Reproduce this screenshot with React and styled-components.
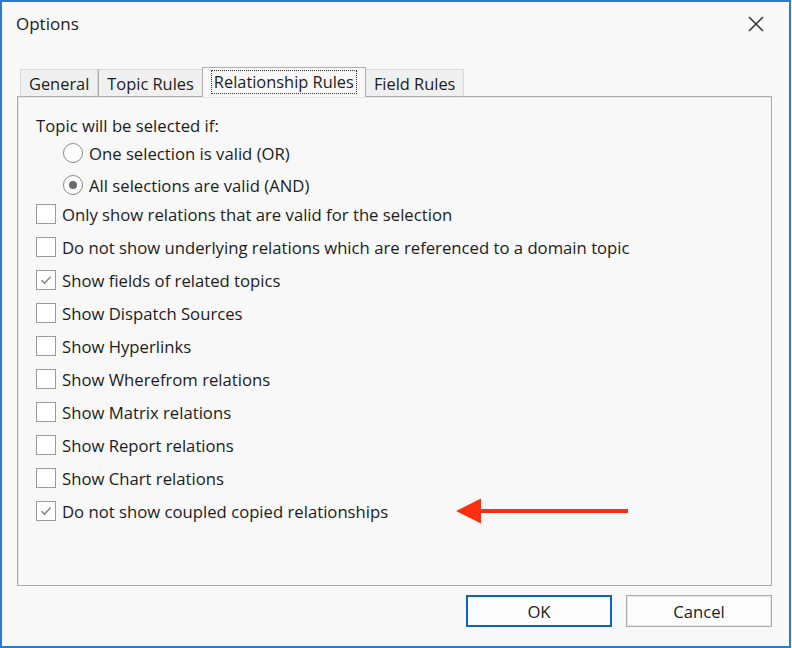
import { useState } from "react";
import styled, { createGlobalStyle } from "styled-components";

const GlobalStyle = createGlobalStyle`
    html, body {
        margin: 0;
        padding: 0;
        background: #ffffff;
    }
    * {
        box-sizing: border-box;
    }
`;

const options = [
    { label: "Only show relations that are valid for the selection", checked: false },
    { label: "Do not show underlying relations which are referenced to a domain topic", checked: false },
    { label: "Show fields of related topics", checked: true },
    { label: "Show Dispatch Sources", checked: false },
    { label: "Show Hyperlinks", checked: false },
    { label: "Show Wherefrom relations", checked: false },
    { label: "Show Matrix relations", checked: false },
    { label: "Show Report relations", checked: false },
    { label: "Show Chart relations", checked: false },
    { label: "Do not show coupled copied relationships", checked: true, arrow: true },
];

const tabs = ["General", "Topic Rules", "Relationship Rules", "Field Rules"];

function CheckMark() {
    return (
        <svg width="14" height="14" viewBox="0 0 14 14">
            <path d="M2.5 7.2 L5.6 10.3 L11.6 3.6" fill="none" stroke="#7c7c7c" strokeWidth="1.4" />
        </svg>
    );
}

function Arrow() {
    return (
        <svg width="172" height="28" viewBox="0 0 172 28">
            <rect x="22" y="12" width="150" height="4" fill="#fe2e10" />
            <polygon points="0,14 25,1.5 25,26.5" fill="#fe2e10" />
        </svg>
    );
}

export default function App() {
    const [active, setActive] = useState(2);
    const [checks, setChecks] = useState(options.map(o => o.checked));
    const [mode, setMode] = useState("and");

    function toggle(i) {
        setChecks(checks.map((c, j) => (j === i ? !c : c)));
    }

    return (
        <>
            <GlobalStyle />
            <WINDOW>
                <TITLEBAR>
                    <TITLE>Options</TITLE>
                    <CLOSE aria-label="Close">
                        <svg width="16" height="16" viewBox="0 0 16 16">
                            <path d="M1 1 L15 15 M15 1 L1 15" stroke="#333" strokeWidth="1.5" />
                        </svg>
                    </CLOSE>
                </TITLEBAR>
                <BODY>
                    <TABSTRIP>
                        {tabs.map((t, i) => (
                            <TAB key={t} $active={i === active} onClick={() => setActive(i)}>
                                <TABLABEL $active={i === active}>{t}</TABLABEL>
                            </TAB>
                        ))}
                    </TABSTRIP>
                    <PANEL>
                        <HEADING>Topic will be selected if:</HEADING>
                        <RADIOGROUP>
                            <ROW onClick={() => setMode("or")}>
                                <RADIO $on={mode === "or"} />
                                One selection is valid (OR)
                            </ROW>
                            <ROW onClick={() => setMode("and")}>
                                <RADIO $on={mode === "and"} />
                                All selections are valid (AND)
                            </ROW>
                        </RADIOGROUP>
                        <CHECKLIST>
                            {options.map((o, i) => (
                                <ROW key={o.label} onClick={() => toggle(i)}>
                                    <BOX>{checks[i] && <CheckMark />}</BOX>
                                    {o.label}
                                    {o.arrow && <ARROWWRAP><Arrow /></ARROWWRAP>}
                                </ROW>
                            ))}
                        </CHECKLIST>
                    </PANEL>
                    <BUTTONS>
                        <BUTTON $primary>OK</BUTTON>
                        <BUTTON>Cancel</BUTTON>
                    </BUTTONS>
                </BODY>
            </WINDOW>
        </>
    );
}

const WINDOW = styled.div`
    width: 791px;
    height: 648px;
    border: 2px solid #2a7bd3;
    background: #f8f8f8;
    display: flex;
    flex-direction: column;
    font-family: "Open Sans", "Noto Sans", sans-serif;
    font-size: 16.7px;
    color: #1c1c1c;
`;

const TITLEBAR = styled.div`
    height: 65px;
    display: flex;
    justify-content: space-between;
    align-items: flex-start;
    padding: 11px 25px 0 14px;
`;

const TITLE = styled.div`
    font-size: 17px;
    line-height: 22px;
`;

const CLOSE = styled.button`
    border: none;
    background: none;
    padding: 0;
    margin-top: 3px;
    width: 16px;
    height: 16px;
    display: flex;
`;

const BODY = styled.div`
    display: flex;
    flex-direction: column;
    padding: 0 17px 0 15px;
`;

const TABSTRIP = styled.div`
    display: flex;
    align-items: flex-end;
    height: 30px;
    padding-left: 3px;
    position: relative;
    z-index: 1;
    margin-bottom: -1px;
`;

const TAB = styled.div`
    height: ${p => (p.$active ? "30px" : "28px")};
    padding: 0 ${p => (p.$active ? "9px" : "8px")};
    margin: 0 ${p => (p.$active ? "-1px" : "0")};
    border: 1px solid ${p => (p.$active ? "#adadad" : "#d9d9d9")};
    border-bottom: ${p => (p.$active ? "none" : "1px solid #adadad")};
    background: ${p => (p.$active ? "#f8f8f8" : "#f0f0f0")};
    display: flex;
    align-items: center;
    font-size: 16.4px;
    cursor: default;
    & + & {
        border-left: ${p => (p.$active ? "1px solid #adadad" : "none")};
    }
`;

const TABLABEL = styled.span`
    padding: 0 ${p => (p.$active ? "2px" : "0")};
    line-height: 22px;
    outline: ${p => (p.$active ? "1px dotted #333" : "none")};
    margin-top: ${p => (p.$active ? "-1px" : "1px")};
`;

const PANEL = styled.div`
    height: 490px;
    border: 1px solid #adadad;
    box-shadow: inset 1px 1px 0 #e4e4e4;
    background: #f8f8f8;
    padding: 18px 0 0 18px;
    display: flex;
    flex-direction: column;
`;

const HEADING = styled.div`
    line-height: 22px;
`;

const RADIOGROUP = styled.div`
    display: flex;
    flex-direction: column;
    gap: 10px;
    padding-left: 27px;
    margin: 5px 0 7px;
`;

const CHECKLIST = styled.div`
    display: flex;
    flex-direction: column;
    gap: 11px;
`;

const ROW = styled.div`
    display: flex;
    align-items: center;
    gap: 6px;
    height: 22px;
    position: relative;
    white-space: nowrap;
    cursor: default;
`;

const RADIO = styled.span`
    width: 20px;
    height: 20px;
    border-radius: 50%;
    border: 1px solid #8a8a8a;
    background: #fff;
    display: flex;
    align-items: center;
    justify-content: center;
    &::after {
        content: "";
        width: 8px;
        height: 8px;
        border-radius: 50%;
        background: ${p => (p.$on ? "#6b6b6b" : "transparent")};
    }
`;

const BOX = styled.span`
    width: 20px;
    height: 20px;
    border: 1px solid #9a9a9a;
    background: #fff;
    display: flex;
    align-items: center;
    justify-content: center;
`;

const ARROWWRAP = styled.span`
    position: absolute;
    left: 420px;
    top: -3px;
    display: flex;
`;

const BUTTONS = styled.div`
    display: flex;
    justify-content: flex-end;
    gap: 14px;
    margin-top: 9px;
`;

const BUTTON = styled.button`
    width: 146px;
    height: 32px;
    font-family: inherit;
    font-size: 16.7px;
    color: #1c1c1c;
    background: #fdfdfd;
    border: ${p => (p.$primary ? "2px solid #0b63c4" : "1px solid #adadad")};
    box-shadow: ${p => (p.$primary ? "none" : "inset 0 0 0 1px #e6e6e6")};
    padding: 0;
`;
